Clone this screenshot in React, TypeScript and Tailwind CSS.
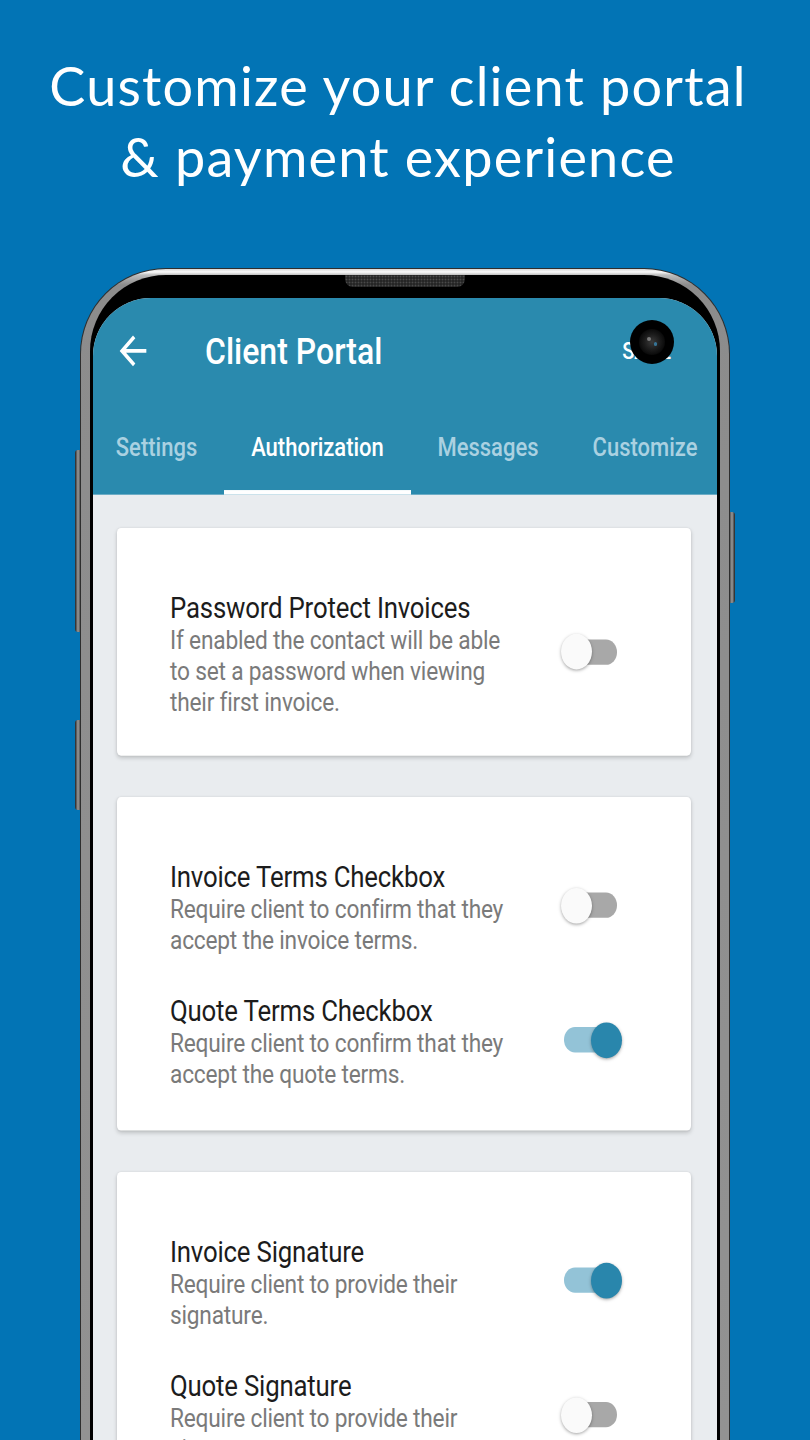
import React from "react";

type Row = { title: string; lines: string[]; on: boolean };

function Toggle({ on }: { on: boolean }) {
  return (
    <div className="relative w-[61px] h-[31px] shrink-0 -translate-y-[2px]">
      <div
        className={
          "absolute left-[3px] top-[4.5px] w-[53px] h-[22px] rounded-full " +
          (on ? "bg-[#93c3d7]" : "bg-[#a8a8a8]")
        }
      />
      <div
        className={
          "absolute top-0 w-[31px] h-[31px] rounded-full shadow-[0_1px_3px_rgba(0,0,0,0.35)] " +
          (on ? "left-[30px] bg-[#2986ac]" : "left-0 bg-[#fafafa]")
        }
      />
    </div>
  );
}

function SettingRow({ row }: { row: Row }) {
  return (
    <div className="flex items-center justify-between">
      <div className="flex flex-col">
        <div className="text-[25.8px] leading-[30px] text-[#1c1c1c] tracking-[-0.2px]">{row.title}</div>
        {row.lines.map((l, i) => (
          <div key={i} className="text-[22.7px] leading-[27px] text-[#7a7a7a] tracking-[-0.2px]">
            {l}
          </div>
        ))}
      </div>
      <Toggle on={row.on} />
    </div>
  );
}

function Card({ rows, pb }: { rows: Row[]; pb: string }) {
  return (
    <div
      className={
        "bg-white rounded-[4px] shadow-[0_2px_4px_rgba(0,0,0,0.18),0_0_2px_rgba(0,0,0,0.08)] pt-[54px] pl-[53px] pr-[69px] flex flex-col gap-[33px] " +
        pb
      }
    >
      {rows.map((r, i) => (
        <SettingRow key={i} row={r} />
      ))}
    </div>
  );
}

export default function App() {
  const tabs = [
    { label: "Settings", w: "w-[131px]", active: false, pr: "pr-[4px]" },
    { label: "Authorization", w: "w-[187px]", active: true, pr: "" },
    { label: "Messages", w: "w-[154px]", active: false, pr: "" },
    { label: "Customize", w: "w-[160px]", active: false, pr: "" },
  ];
  return (
    <div className="w-[810px] h-[1440px] overflow-hidden bg-[#0274b5] flex flex-col">
      <div
        className="pt-[50px] pr-[14px] text-center text-white text-[54px] leading-[71px] font-normal tracking-[1.2px]"
        style={{ fontFamily: "Lato, 'Open Sans', sans-serif" }}
      >
        <div>Customize your client portal</div>
        <div>&amp; payment experience</div>
      </div>

      {/* Phone */}
      <div className="relative mt-[76px] ml-[80px] w-[650px] rounded-t-[86px] bg-[#2e2e2e] pt-[1px] px-[1px]">
        {/* side buttons */}
        <div className="absolute left-[-5px] top-[182px] w-[5px] h-[182px] rounded-l-[3px] bg-[linear-gradient(90deg,#222,#9a9a9a_60%,#555)]" />
        <div className="absolute left-[-5px] top-[452px] w-[5px] h-[90px] rounded-l-[3px] bg-[linear-gradient(90deg,#222,#9a9a9a_60%,#555)]" />
        <div className="absolute right-[-5px] top-[244px] w-[5px] h-[91px] rounded-r-[3px] bg-[linear-gradient(270deg,#222,#9a9a9a_60%,#555)]" />

        <div className="rounded-t-[85px] bg-[linear-gradient(180deg,#d8d8d8_0px,#fbfbfb_3px,#bdbdbd_6px,#8c8c8c_16px,#929292_100%)] pt-[6px] px-[9px]">
          <div className="relative rounded-t-[76px] bg-black pt-[23px] px-[3px]">
            {/* speaker grill */}
            <div className="absolute left-[255px] top-0 w-[120px] h-[12px] rounded-b-[8px] bg-[#262626] bg-[radial-gradient(#4a4a4a_0.8px,transparent_1.1px)] bg-[length:3px_3px]" />
            {/* screen */}
            <div
              className="relative h-[1142px] rounded-t-[58px] overflow-hidden bg-[#e9ecef]"
              style={{ fontFamily: "Roboto, 'Noto Sans', sans-serif" }}
            >
              <div className="origin-top scale-y-[1.15] flex flex-col">
                {/* header */}
                <div className="bg-[#2a8aae] h-[171px] flex flex-col">
                  <div className="h-[92px] flex items-center pl-[20px]">
                    <svg width="40" height="40" viewBox="0 0 24 24" fill="white">
                      <path d="M20 11H7.83l5.59-5.59L12 4l-8 8 8 8 1.41-1.41L7.83 13H20v-2z" />
                    </svg>
                    <div className="ml-[52px] text-white text-[32px] font-medium leading-none">Client Portal</div>
                    <div className="ml-auto mr-[46px] text-white text-[20px] font-medium">SAVE</div>
                  </div>
                  <div className="h-[79px] flex">
                    {tabs.map((t) => (
                      <div key={t.label} className={t.w + " shrink-0 flex flex-col"}>
                        <div
                          className={
                            "flex-1 flex items-center justify-center text-[22px] font-medium whitespace-nowrap " +
                            t.pr +
                            " " +
                            (t.active ? "text-white" : "text-[#aad1e1]")
                          }
                        >
                          {t.label}
                        </div>
                        <div className={"h-[4px] " + (t.active ? "bg-white" : "bg-transparent")} />
                      </div>
                    ))}
                  </div>
                </div>

                {/* body */}
                <div className="pt-[29px] pl-[24px] pr-[26px] flex flex-col gap-[36px]">
                  <Card
                    pb="pb-[33px]"
                    rows={[
                      {
                        title: "Password Protect Invoices",
                        lines: [
                          "If enabled the contact will be able",
                          "to set a password when viewing",
                          "their first invoice.",
                        ],
                        on: false,
                      },
                    ]}
                  />
                  <Card
                    pb="pb-[35px]"
                    rows={[
                      {
                        title: "Invoice Terms Checkbox",
                        lines: ["Require client to confirm that they", "accept the invoice terms."],
                        on: false,
                      },
                      {
                        title: "Quote Terms Checkbox",
                        lines: ["Require client to confirm that they", "accept the quote terms."],
                        on: true,
                      },
                    ]}
                  />
                  <Card
                    pb="pb-[35px]"
                    rows={[
                      {
                        title: "Invoice Signature",
                        lines: ["Require client to provide their", "signature."],
                        on: true,
                      },
                      {
                        title: "Quote Signature",
                        lines: ["Require client to provide their", "signature."],
                        on: false,
                      },
                    ]}
                  />
                </div>
              </div>

              {/* camera hole */}
              <div className="absolute left-[537px] top-[22px] w-[44px] h-[44px] rounded-full bg-black flex items-center justify-center">
                <div className="relative w-[26px] h-[26px] rounded-full bg-[radial-gradient(circle_at_50%_50%,#3a3a3a_0%,#1a1a1a_45%,#0a0a0a_70%,#202020_100%)]">
                  <div className="absolute left-[8px] top-[8px] w-[4px] h-[4px] rounded-full bg-[#9a9a9a] opacity-70" />
                  <div className="absolute left-[15px] top-[13px] w-[3px] h-[4px] rounded-full bg-[#3a86b0] opacity-80" />
                </div>
              </div>
            </div>
          </div>
        </div>
      </div>
    </div>
  );
}
